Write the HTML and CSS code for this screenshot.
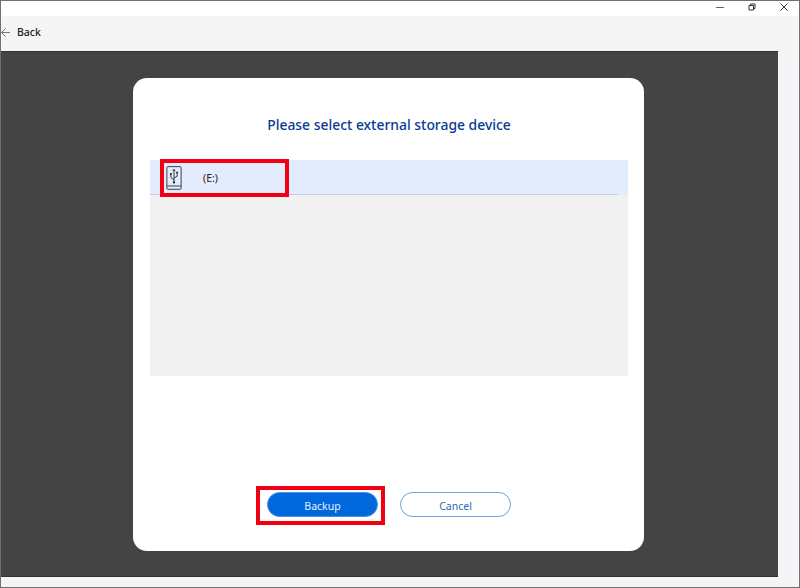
FILE: index.html
```html
<!DOCTYPE html>
<html lang="en">
<head>
<meta charset="utf-8">
<title>Backup</title>
<link rel="stylesheet" href="styles.css">
</head>
<body>
<div class="window">
  <header class="titlebar">
    <svg class="ctl ctl-min" width="8" height="8" viewBox="0 0 8 8"><path d="M0 4.500h8" /></svg>
    <svg class="ctl ctl-max" width="8" height="8" viewBox="0 0 8 8"><path d="M1 2.500h4.500v4.500h-4.500zM2.500 2.500v-1.500h4.500v4.500h-1.500" /></svg>
    <svg class="ctl ctl-close" width="8" height="8" viewBox="0 0 8 8"><path d="M.5 .5l7 7M7.500 .5l-7 7" /></svg>
  </header>
  <nav class="toolbar">
    <svg class="back-icon" width="9" height="9" viewBox="0 0 9 9"><path d="M4.500 .5L.5 4.500l4 4M.5 4.500h8.500" /></svg>
    <span class="back-label">Back</span>
  </nav>
  <main class="stage">
    <section class="card">
      <h1 class="title">Please select external storage device</h1>
      <div class="device-list">
        <div class="device-row">
          <svg class="usb-icon" width="16" height="24" viewBox="0 0 18 27">
            <path class="usb-body" d="M2 .7h14a1 1 0 0 1 1 1v23.500a1 1 0 0 1-1 1h-14a1 1 0 0 1-1-1v-23.500a1 1 0 0 1 1-1zM1 22.500h16" />
            <path class="usb-glyph" d="M9 4v14M9 15.500l-3.500-2.500v-3M9 13.500l3.500-2v-3M7.700 5.500L9 3.800l1.300 1.700" />
            <rect class="usb-dot" x="4.500" y="8" width="2" height="2" />
            <rect class="usb-dot" x="11.500" y="6.500" width="2" height="2" />
            <circle class="usb-dot" cx="9" cy="18.500" r="1.300" />
          </svg>
          <span class="device-name">(E:)</span>
          <span class="mark mark-device"></span>
        </div>
      </div>
      <div class="actions">
        <div class="action-wrap">
          <button class="btn btn-primary" type="button">Backup</button>
          <span class="mark mark-backup"></span>
        </div>
        <button class="btn btn-secondary" type="button">Cancel</button>
      </div>
    </section>
  </main>
</div>
</body>
</html>
```
FILE: styles.css
```css
* { box-sizing: border-box; }
html, body { margin: 0; height: 100%; }
body { font-family: "Noto Sans", "Open Sans", sans-serif; background: #f5f5f7; }

.window {
  width: 800px;
  height: 588px;
  display: flex;
  flex-direction: column;
  background: #f5f5f7;
  border: 1px solid #707070;
}

.titlebar {
  height: 15px;
  flex: none;
  background: #fff;
  display: flex;
  justify-content: flex-end;
  align-items: flex-start;
  gap: 24px;
  padding: 2px 11px 0 0;
}
.ctl { fill: none; stroke: #333; stroke-width: 1; flex: none; }
.ctl-min { stroke: #666; }

.toolbar {
  height: 35px;
  flex: none;
  display: flex;
  align-items: center;
  padding-bottom: 3px;
  background: #f5f5f5;
}
.back-icon { fill: none; stroke: #777; stroke-width: 1; margin-right: 7px; flex: none; }
.back-label { font-size: 10.500px; font-weight: 500; color: #222; }

.stage {
  flex: none;
  width: 777px;
  height: 526px;
  background: #444;
  border-top: 1px solid #333;
  border-bottom: 1px solid #333;
  padding: 26px 0 0 132px;
}

.card {
  width: 511px;
  height: 473px;
  background: #fff;
  border-radius: 14px;
  display: flex;
  flex-direction: column;
  align-items: center;
  padding: 37px 16px 0 17px;
}

.title {
  margin: 0 0 25px;
  height: 20px;
  font-size: 13.900px;
  line-height: 20px;
  font-weight: 500;
  color: #0a3a94;
}

.device-list {
  width: 478px;
  height: 216px;
  flex: none;
  background: #f1f1f1;
}

.device-row {
  position: relative;
  height: 35px;
  display: flex;
  align-items: center;
  padding-left: 16px;
  background: #e3ecfd;
}
.device-row::after {
  content: "";
  position: absolute;
  left: 0;
  right: 10px;
  bottom: 0;
  height: 1px;
  background: #c9cce2;
}

.usb-icon { flex: none; }
.usb-body { fill: none; stroke: #3c3c3c; stroke-width: 1.100; }
.usb-glyph { fill: none; stroke: #222; stroke-width: 1; }
.usb-dot { fill: #222; }

.device-name {
  margin-left: 21px;
  font-size: 10.500px;
  color: #222;
}

.mark {
  position: absolute;
  z-index: 1;
  border: 4px solid #f00010;
  pointer-events: none;
}
.mark-device { left: 10px; top: -1px; width: 129px; height: 38px; }
.mark-backup { left: -11px; top: -6px; width: 129px; height: 39px; }

.actions {
  display: flex;
  gap: 22px;
  margin-top: 116px;
}
.action-wrap { position: relative; }

.btn {
  display: block;
  height: 25px;
  border-radius: 13px;
  font-family: inherit;
  font-size: 10.500px;
  padding: 2px 0 0;
  margin: 0;
}
.btn-primary {
  width: 111px;
  background: #0067dc;
  border: 1px solid #4a90e2;
  color: #e6f0fc;
}
.btn-secondary {
  width: 111px;
  background: #fff;
  border: 1px solid #6fa3d6;
  color: #2b6cb0;
}
```
